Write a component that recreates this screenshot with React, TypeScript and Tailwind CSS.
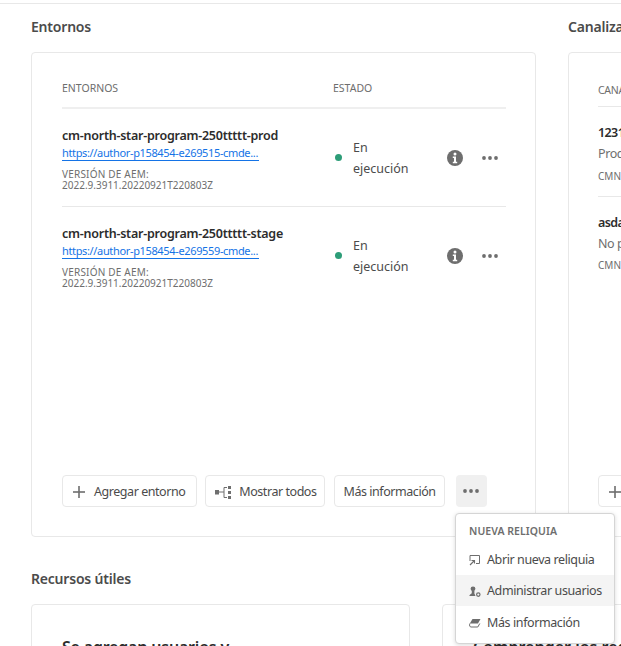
import React from "react";

const font = { fontFamily: '"Noto Sans", sans-serif' };

function Dots({ className = "" }: { className?: string }) {
  return (
    <svg width="16" height="4" viewBox="0 0 16 4" className={className} fill="#6e6e6e">
      <circle cx="2" cy="2" r="1.9" />
      <circle cx="8" cy="2" r="1.9" />
      <circle cx="14" cy="2" r="1.9" />
    </svg>
  );
}

function Info() {
  return (
    <svg width="16" height="16" viewBox="0 0 16 16">
      <circle cx="8" cy="8" r="8" fill="#6e6e6e" />
      <circle cx="8" cy="4" r="1.5" fill="#fff" />
      <path d="M5.8 6.6h3.2v5.2h1.2v1.4H5.8v-1.4H7V8H5.8z" fill="#fff" />
    </svg>
  );
}

function Plus() {
  return (
    <span className="flex w-[31px] justify-center">
      <svg width="12" height="12" viewBox="0 0 12 12" fill="#6e6e6e">
        <rect x="5.2" width="1.6" height="12" />
        <rect y="5.2" width="12" height="1.6" />
      </svg>
    </span>
  );
}

function EnvRow({ name, url, border }: { name: string; url: string; border: boolean }) {
  return (
    <div className={`flex h-[98px] items-center border-b ${border ? "border-[#e8e8e8]" : "border-transparent"}`}>
      <div className="w-[271px] shrink-0 pt-[3px]">
        <div className="text-[12.5px] leading-[17px] font-semibold tracking-[-0.25px] text-[#2c2c2c] whitespace-nowrap">{name}</div>
        <div className="mt-px w-[197px] border-b border-[#1473e6] text-[11px] leading-[15px] tracking-[-0.35px] text-[#1473e6] whitespace-nowrap">{url}</div>
        <div className="mt-[7px] text-[10px] leading-[12px] text-[#6e6e6e] tracking-[0.2px]">VERSIÓN DE AEM:</div>
        <div className="text-[10px] leading-[11px] text-[#6e6e6e] whitespace-nowrap">2022.9.3911.20220921T220803Z</div>
      </div>
      <div className="w-[20px] shrink-0 pl-[2px]">
        <div className="h-[7px] w-[7px] rounded-full bg-[#2d9d78]" />
      </div>
      <div className="w-[94px] shrink-0 text-[12.5px] leading-[21px] text-[#4b4b4b]">
        En
        <br />
        ejecución
      </div>
      <Info />
      <Dots className="ml-[19px]" />
    </div>
  );
}

function OutlineButton({ children, className = "" }: { children: React.ReactNode; className?: string }) {
  return (
    <button className={`flex h-[32px] items-center rounded-[4px] border border-[#e8e8e8] bg-white pt-[2px] text-[12.5px] tracking-[-0.45px] text-[#4b4b4b] whitespace-nowrap ${className}`}>
      {children}
    </button>
  );
}

const menuItem = "flex h-[31px] items-center pl-[13px] pt-[2px] text-[12.5px] tracking-[-0.4px] text-[#4b4b4b] whitespace-nowrap";

export default function App() {
  return (
    <div className="relative h-[646px] w-[621px] overflow-hidden bg-white" style={font}>
      <div className="mt-[3px] h-px bg-[#e8e8e8]" />
      <div className="flex gap-[32px] pl-[31px] pt-[13px]">
        <section className="w-[505px] shrink-0">
          <h2 className="text-[14px] leading-[19px] font-semibold tracking-[-0.2px] text-[#4b4b4b]">Entornos</h2>
          <div className="mt-[16px] flex h-[485px] flex-col rounded-[4px] border border-[#e8e8e8] pl-[30px] pr-[29px]">
            <div className="flex h-[56px] items-end border-b-2 border-[#efefef] pb-[12px] text-[10.5px] leading-[14px] text-[#6e6e6e]">
              <span className="w-[271px]">ENTORNOS</span>
              <span>ESTADO</span>
            </div>
            <EnvRow name="cm-north-star-program-250ttttt-prod" url="https://author-p158454-e269515-cmde..." border />
            <EnvRow name="cm-north-star-program-250ttttt-stage" url="https://author-p158454-e269559-cmde..." border={false} />
            <div className="mt-auto mb-[29px] flex items-center gap-[8px]">
              <OutlineButton>
                <Plus />
                <span className="pr-[11px]">Agregar entorno</span>
              </OutlineButton>
              <OutlineButton>
                <span className="w-[33px] pl-[9px]">
                  <svg width="17" height="13" viewBox="0 0 17 13" fill="#6e6e6e">
                    <rect x="0" y="4" width="4" height="4.5" />
                    <rect x="13" y="0" width="3" height="3" />
                    <rect x="13" y="5" width="3" height="3" />
                    <rect x="13" y="10" width="3" height="3" />
                    <path d="M4 6h5M12 1.5H9v10h3" stroke="#6e6e6e" strokeWidth="1" fill="none" />
                  </svg>
                </span>
                <span className="pr-[7px]">Mostrar todos</span>
              </OutlineButton>
              <OutlineButton className="ml-px">
                <span className="pl-[9px] pr-[8px]">Más información</span>
              </OutlineButton>
              <button className="ml-[3px] flex h-[32px] w-[31px] items-center justify-center rounded-[4px] bg-[#f0f0f0]">
                <Dots />
              </button>
            </div>
          </div>
        </section>
        <section className="w-[300px] shrink-0">
          <h2 className="text-[14px] leading-[19px] font-semibold tracking-[-0.2px] text-[#4b4b4b]">Canalizaciones</h2>
          <div className="mt-[16px] flex h-[485px] flex-col rounded-[4px] border border-[#e8e8e8] pl-[29px]">
            <div className="flex h-[54px] items-end border-b border-[#e8e8e8] pb-[9px] text-[10.5px] leading-[14px] tracking-[-0.3px] text-[#6e6e6e]">CANALIZACIONES</div>
            <div className="flex h-[90px] flex-col border-b border-[#e8e8e8] pt-[17px]">
              <div className="text-[12.5px] leading-[18px] font-semibold tracking-[-0.6px] text-[#2c2c2c]">123123</div>
              <div className="mt-px text-[12.5px] leading-[21px] tracking-[-0.4px] text-[#6e6e6e]">Producción</div>
              <div className="mt-[4px] text-[10px] leading-[16px] text-[#6e6e6e]">CMN</div>
            </div>
            <div className="flex h-[88px] flex-col pt-[17px]">
              <div className="text-[12.5px] leading-[18px] font-semibold tracking-[-0.6px] text-[#2c2c2c]">asdasd</div>
              <div className="mt-px text-[12.5px] leading-[21px] tracking-[-0.4px] text-[#6e6e6e]">No producción</div>
              <div className="mt-[3px] text-[10px] leading-[16px] text-[#6e6e6e]">CMN</div>
            </div>
            <div className="mt-auto mb-[29px]">
              <OutlineButton>
                <Plus />
                <span className="pr-[11px]">Agregar canalización</span>
              </OutlineButton>
            </div>
          </div>
        </section>
      </div>
      <h2 className="mt-[32px] pl-[31px] text-[14px] leading-[19px] font-semibold tracking-[-0.2px] text-[#4b4b4b]">Recursos útiles</h2>
      <div className="mt-[16px] flex gap-[32px] pl-[31px]">
        <div className="h-[100px] w-[379px] shrink-0 rounded-[4px] border border-[#e8e8e8] pl-[30px] pt-[31px] text-[16px] font-semibold leading-[22px] tracking-[-0.2px] text-[#2c2c2c]">
          Se agregan usuarios y
        </div>
        <div className="h-[100px] w-[300px] shrink-0 rounded-[4px] border border-[#e8e8e8] pl-[30px] pt-[31px] text-[16px] font-semibold leading-[22px] text-[#2c2c2c] whitespace-nowrap">
          Comprender los registros
        </div>
      </div>

      <div className="absolute left-[455px] top-[513px] h-[131px] w-[160px] rounded-[4px] border border-[#d5d5d5] bg-white shadow-[0_1px_4px_rgba(0,0,0,0.15)]">
        <div className="pl-[13px] pt-[9px] text-[10.5px] leading-[16px] font-semibold tracking-[0.05px] text-[#6e6e6e]">NUEVA RELIQUIA</div>
        <div className={`mt-[5px] ${menuItem}`}>
          <svg width="11" height="11" viewBox="0 0 11 11" fill="none" stroke="#6e6e6e" strokeWidth="1" className="mr-[7px] shrink-0">
            <path d="M1 6V.5h9.5v8H7" />
            <path d="M1 10l4-4M2.5 5.5h3v3" strokeWidth="1.1" />
          </svg>
          Abrir nueva reliquia
        </div>
        <div className={`${menuItem} bg-[#f4f4f4]`}>
          <svg width="12" height="12" viewBox="0 0 12 12" fill="#6e6e6e" className="mr-[6px] shrink-0">
            <circle cx="4" cy="2.8" r="2.4" />
            <path d="M2.8 5h2.6v2.4L6.5 10H0.3C.5 8.2 2.4 8 2.8 7z" />
            <circle cx="9.3" cy="8.6" r="1.7" fill="none" stroke="#6e6e6e" strokeWidth="1.2" />
          </svg>
          Administrar usuarios
        </div>
        <div className={`${menuItem} mt-px`}>
          <svg width="12" height="11" viewBox="0 0 12 11" className="mr-[6px] shrink-0">
            <path d="M3.5 1h8L9 5.5H.8z" fill="#6e6e6e" />
            <path d="M.8 5.5C.2 7.5.8 9 2 9h6.8l2-3.5" fill="none" stroke="#6e6e6e" strokeWidth="1" />
          </svg>
          Más información
        </div>
      </div>
    </div>
  );
}
